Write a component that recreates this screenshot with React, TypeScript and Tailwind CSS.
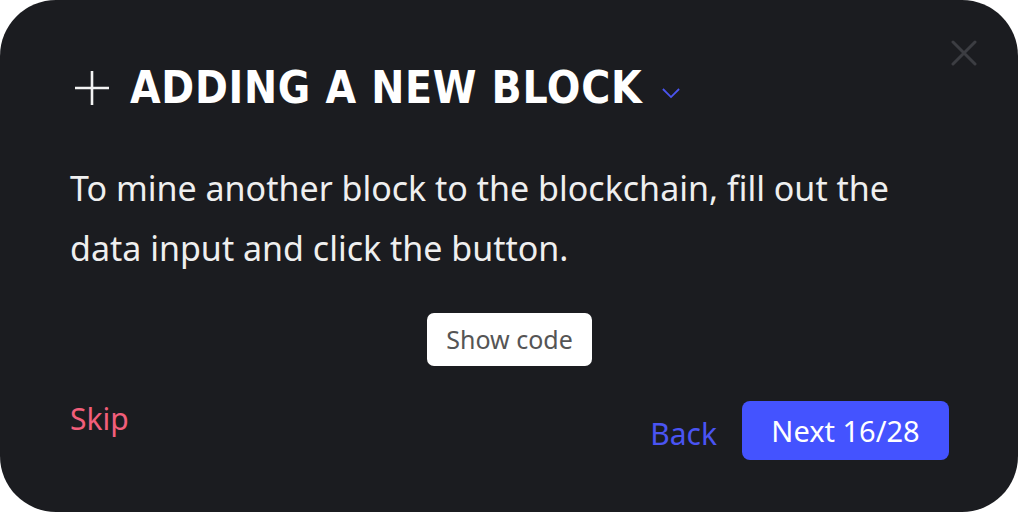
import React from "react";

export default function App() {
  return (
    <div className="w-[1018px] h-[512px] bg-white">
      <div className="relative w-full h-full rounded-[56px] bg-[#1b1c20] pl-[70px] pr-[69px] pt-[62px] flex flex-col">
        <button className="absolute right-[41px] top-[40px] w-[26px] h-[26px]">
          <svg viewBox="0 0 26 26" className="w-[26px] h-[26px]" fill="none" stroke="#3c3d42" strokeWidth="3" strokeLinecap="round">
            <path d="M2 2 L24 24 M24 2 L2 24" />
          </svg>
        </button>
        <div className="flex items-center h-[52px]">
          <svg viewBox="0 0 36 36" className="w-[36px] h-[36px] ml-[4px] mr-[20px]" fill="none" stroke="#f4f4f4" strokeWidth="2.6">
            <path d="M18 1 V35 M1 18 H35" />
          </svg>
          <h1 className="text-white font-bold text-[44px] tracking-[0.7px] leading-none font-['DejaVu_Sans_Condensed','DejaVu_Sans',sans-serif]">
            ADDING A NEW BLOCK
          </h1>
          <svg viewBox="0 0 20 12" className="w-[18px] h-[11px] ml-[20px] mt-[10px]" fill="none" stroke="#4b55f0" strokeWidth="2">
            <path d="M1 1 L10 10 L19 1" />
          </svg>
        </div>
        <p className="mt-[44px] text-[#efefef] text-[34px] tracking-[0px] leading-[60px] font-['Noto_Sans',sans-serif]">
          To mine another block to the blockchain, fill out the data input and click the button.
        </p>
        <div className="flex justify-center mt-[35px]">
          <button className="bg-white rounded-[7px] w-[165px] h-[53px] text-[#555555] text-[25px] font-['Noto_Sans',sans-serif]">
            Show code
          </button>
        </div>
        <div className="flex items-start justify-between mt-[35px]">
          <button className="text-[#f25e7a] text-[30px] leading-none mt-[3px] font-['Noto_Sans',sans-serif]">Skip</button>
          <div className="flex items-center gap-[25px]">
            <button className="text-[#4a54f2] text-[30px] mt-[6px] font-['Noto_Sans',sans-serif]">Back</button>
            <button className="bg-[#4453ff] rounded-[8px] w-[207px] h-[59px] text-white text-[29px] font-['Noto_Sans',sans-serif]">
              Next 16/28
            </button>
          </div>
        </div>
      </div>
    </div>
  );
}
